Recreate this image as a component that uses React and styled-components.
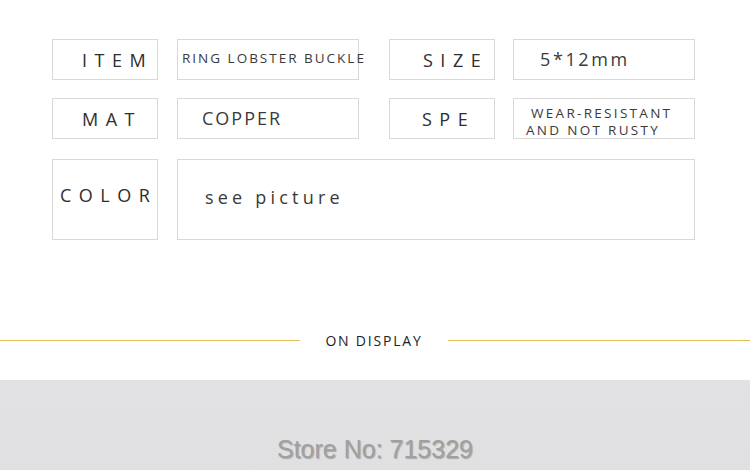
import styled, { createGlobalStyle } from 'styled-components';

const GlobalStyle = createGlobalStyle`
	body {
		margin: 0;
		background: #fff;
		font-family: 'Open Sans', 'Noto Sans', sans-serif;
	}
`;

const Page = styled.div`
	width: 750px;
	height: 470px;
	overflow: hidden;
	display: flex;
	flex-direction: column;
`;

// spacer tracks between the boxes keep the uneven gaps of the original
const SpecGrid = styled.div`
	display: grid;
	grid-template-columns: 106px 19px 182px 30px 106px 18px 182px;
	grid-template-rows: 41px 18px 41px 20px 81px;
	padding: 39px 0 0 52px;
`;

const Cell = styled.div`
	box-sizing: border-box;
	border: 1px solid #d9d9d9;
	display: flex;
	flex-direction: column;
	justify-content: center;
	padding-left: ${(props) => props.$pad}px;
	padding-bottom: ${(props) => props.$lift || 0}px;
	padding-top: ${(props) => props.$drop || 0}px;
	grid-column: ${(props) => props.$col};
	grid-row: ${(props) => props.$row};
	white-space: nowrap;
	color: #333;
`;

const Label = styled.span`
	font-size: 18px;
	letter-spacing: 7.5px;
	color: #2e2e2e;
`;

const Value = styled.span`
	font-size: ${(props) => props.$size || 18}px;
	letter-spacing: ${(props) => props.$spacing}px;
	line-height: ${(props) => props.$lh || 'normal'};
	color: #3a3a3a;
	margin-left: ${(props) => props.$indent || 0}px;
`;

const Divider = styled.div`
	display: flex;
	align-items: center;
	margin-top: 90px;
	height: 20px;
`;

const Line = styled.div`
	height: 1px;
	background: #e2bf57;
	width: ${(props) => props.$w}px;
`;

const DividerText = styled.span`
	flex: 1;
	text-align: center;
	font-size: 14px;
	letter-spacing: 1.8px;
	color: #222;
`;

const Band = styled.div`
	margin-top: 30px;
	flex: 1;
	background: linear-gradient(to bottom, #e2e2e4, #e0e0e2);
	display: flex;
	justify-content: center;
	align-items: flex-end;
	padding-bottom: 6px;
`;

const StoreText = styled.span`
	font-family: 'Liberation Sans', Arial, sans-serif;
	font-size: 25px;
	letter-spacing: 0px;
	color: #a0a0a0;
	text-shadow: 1px 1px 1px rgba(0, 0, 0, 0.25);
`;

const App = () => (
	<Page>
		<GlobalStyle />
		<SpecGrid>
			<Cell $col={1} $row={1} $pad={29}><Label>ITEM</Label></Cell>
			<Cell $col={3} $row={1} $pad={4} $lift={4}>
				<Value $size={13.5} $spacing={2}>RING LOBSTER BUCKLE</Value>
			</Cell>
			<Cell $col={5} $row={1} $pad={33}><Label>SIZE</Label></Cell>
			<Cell $col={7} $row={1} $pad={26} $lift={2}>
				<Value $spacing={2.6}>5*12mm</Value>
			</Cell>

			<Cell $col={1} $row={3} $pad={29}><Label>MAT</Label></Cell>
			<Cell $col={3} $row={3} $pad={24} $lift={2}>
				<Value $spacing={2}>COPPER</Value>
			</Cell>
			<Cell $col={5} $row={3} $pad={32}><Label>SPE</Label></Cell>
			<Cell $col={7} $row={3} $pad={12} $drop={6}>
				<Value $size={13.5} $spacing={2.3} $lh="17px" $indent={5}>WEAR-RESISTANT</Value>
				<Value $size={13.5} $spacing={2.3} $lh="17px">AND NOT RUSTY</Value>
			</Cell>

			<Cell $col={1} $row={5} $pad={7} $lift={10}><Label>COLOR</Label></Cell>
			<Cell $col="3 / 8" $row={5} $pad={27} $lift={6}>
				<Value $spacing={4.2}>see picture</Value>
			</Cell>
		</SpecGrid>
		<Divider>
			<Line $w={300} />
			<DividerText>ON DISPLAY</DividerText>
			<Line $w={302} />
		</Divider>
		<Band>
			<StoreText>Store No: 715329</StoreText>
		</Band>
	</Page>
);

export default App;
